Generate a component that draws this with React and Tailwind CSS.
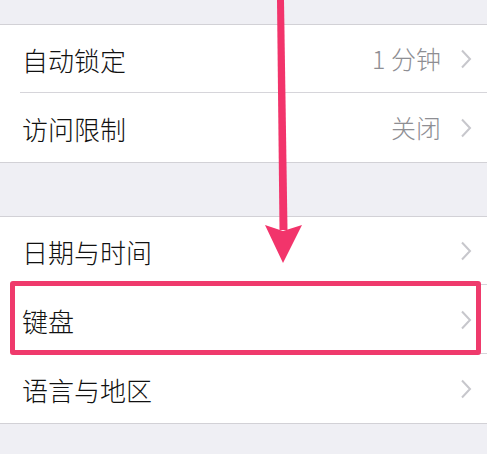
const font = { fontFamily: '"Noto Sans CJK SC", "Noto Sans", sans-serif' };

const Chevron = () => (
  <svg width="12" height="20" viewBox="0 0 12 20" className="shrink-0">
    <path d="M2 1.5 L10 10 L2 18.5" fill="none" stroke="#c7c7cc" strokeWidth="2" />
  </svg>
);

const Row = ({ label, value, last }) => (
  <div className="relative h-[68px] flex items-center pl-[22px] pr-[15px] bg-white">
    <span className="flex-1 text-[26px] font-light text-[#111]">{label}</span>
    {value && <span className="text-[25px] font-light text-[#8e8e93] mr-[19px]">{value}</span>}
    <Chevron />
    {!last && <div className="absolute left-[20px] right-0 bottom-0 h-px bg-[#d6d5da]" />}
  </div>
);

export default function App() {
  return (
    <div className="relative w-[487px] h-[454px] overflow-hidden bg-[#efeff4]" style={font}>
      <div className="h-[25px] border-b border-[#d2d1d6]" />
      <div className="flex flex-col">
        <Row label="自动锁定" value="1 分钟" />
        <div className="h-px bg-white" />
        <Row label="访问限制" value="关闭" last />
      </div>
      <div className="h-[55px] border-y border-[#d2d1d6]" />
      <div className="flex flex-col">
        <Row label="日期与时间" />
        <div className="h-px bg-white" />
        <Row label="键盘" />
        <div className="h-px bg-white" />
        <Row label="语言与地区" last />
      </div>
      <div className="border-t border-[#d2d1d6]" />

      {/* annotation overlay */}
      <div className="absolute left-[10px] top-[281px] w-[471px] h-[74px] border-[5px] border-[#ef3a6c] rounded-[3px]" />
      <svg className="absolute left-0 top-0" width="487" height="454">
        <polygon points="277,0 284,0 287.5,230 279.5,230" fill="#f2346b" />
        <polygon points="265,225 283,231 302,225 283,263" fill="#f2346b" />
      </svg>
    </div>
  );
}
